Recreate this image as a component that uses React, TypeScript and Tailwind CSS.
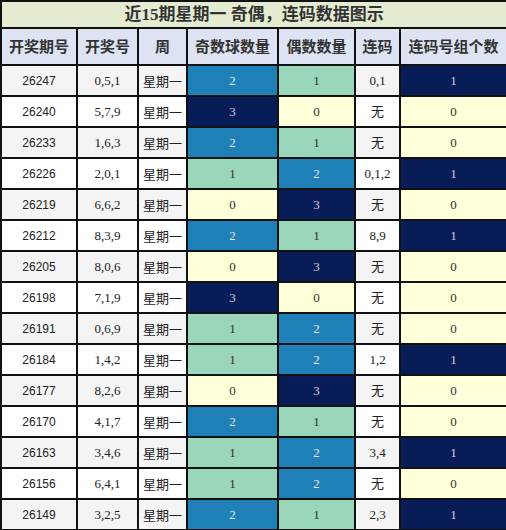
import React from 'react';

type Row = { issue: string; nums: string; odd: number; even: number; lian: string; groups: number };

const rows: Row[] = [
  { issue: '26247', nums: '0,5,1', odd: 2, even: 1, lian: '0,1', groups: 1 },
  { issue: '26240', nums: '5,7,9', odd: 3, even: 0, lian: '无', groups: 0 },
  { issue: '26233', nums: '1,6,3', odd: 2, even: 1, lian: '无', groups: 0 },
  { issue: '26226', nums: '2,0,1', odd: 1, even: 2, lian: '0,1,2', groups: 1 },
  { issue: '26219', nums: '6,6,2', odd: 0, even: 3, lian: '无', groups: 0 },
  { issue: '26212', nums: '8,3,9', odd: 2, even: 1, lian: '8,9', groups: 1 },
  { issue: '26205', nums: '8,0,6', odd: 0, even: 3, lian: '无', groups: 0 },
  { issue: '26198', nums: '7,1,9', odd: 3, even: 0, lian: '无', groups: 0 },
  { issue: '26191', nums: '0,6,9', odd: 1, even: 2, lian: '无', groups: 0 },
  { issue: '26184', nums: '1,4,2', odd: 1, even: 2, lian: '1,2', groups: 1 },
  { issue: '26177', nums: '8,2,6', odd: 0, even: 3, lian: '无', groups: 0 },
  { issue: '26170', nums: '4,1,7', odd: 2, even: 1, lian: '无', groups: 0 },
  { issue: '26163', nums: '3,4,6', odd: 1, even: 2, lian: '3,4', groups: 1 },
  { issue: '26156', nums: '6,4,1', odd: 1, even: 2, lian: '无', groups: 0 },
  { issue: '26149', nums: '3,2,5', odd: 2, even: 1, lian: '2,3', groups: 1 },
];

// heat colours for 0..3
const countCls = [
  'bg-[#ffffd9] text-[#333]',
  'bg-[#99d6ba] text-[#333]',
  'bg-[#1f80b8] text-[#e8e8e8]',
  'bg-[#081d58] text-[#d0d0d0]',
];
const groupCls = ['bg-[#ffffd9] text-[#333]', 'bg-[#081d58] text-[#d0d0d0]'];

const cell = 'border-2 border-[#111] text-center p-0';
const sans = "font-['Liberation_Sans','Noto_Sans_CJK_SC',sans-serif]";
const serif = "font-['Liberation_Serif','Noto_Sans_CJK_SC',serif]";
const cjk = "font-['Noto_Sans_CJK_SC',sans-serif]";

const App: React.FC = () => {
  return (
    <div className="w-[506px] h-[530px] bg-white overflow-hidden">
      <table className="w-[506px] table-fixed border-collapse">
        <colgroup>
          <col className="w-[76px]" />
          <col className="w-[61px]" />
          <col className="w-[49px]" />
          <col className="w-[91px]" />
          <col className="w-[77px]" />
          <col className="w-[45px]" />
          <col className="w-[107px]" />
        </colgroup>
        <thead>
          <tr className="h-[27px]">
            <th colSpan={7} className={`${cell} bg-[#e3ecd1] text-[#333] text-[17px] font-bold leading-none ${serif}`}>
              近15期星期一 奇偶，连码数据图示
            </th>
          </tr>
          <tr className={`h-[37px] bg-[#dde3f2] text-[#333] text-[15px] font-bold ${cjk}`}>
            <th className={cell}>开奖期号</th>
            <th className={cell}>开奖号</th>
            <th className={cell}>周</th>
            <th className={cell}>奇数球数量</th>
            <th className={cell}>偶数数量</th>
            <th className={cell}>连码</th>
            <th className={cell}>连码号组个数</th>
          </tr>
        </thead>
        <tbody>
          {rows.map((r, i) => {
            const base = i % 2 === 0 ? 'bg-[#f4f4f4]' : 'bg-white';
            return (
              <tr key={r.issue} className="h-[31px] text-[13px] text-[#222]">
                <td className={`${cell} ${base} ${sans} text-[12px]`}>{r.issue}</td>
                <td className={`${cell} ${base} ${serif}`}>{r.nums}</td>
                <td className={`${cell} ${base} ${cjk} text-[13px]`}>星期一</td>
                <td className={`${cell} ${countCls[r.odd]} ${serif}`}>{r.odd}</td>
                <td className={`${cell} ${countCls[r.even]} ${serif}`}>{r.even}</td>
                <td className={`${cell} ${base} ${serif}`}>{r.lian}</td>
                <td className={`${cell} ${groupCls[r.groups]} ${serif}`}>{r.groups}</td>
              </tr>
            );
          })}
        </tbody>
      </table>
    </div>
  );
};

export default App;
